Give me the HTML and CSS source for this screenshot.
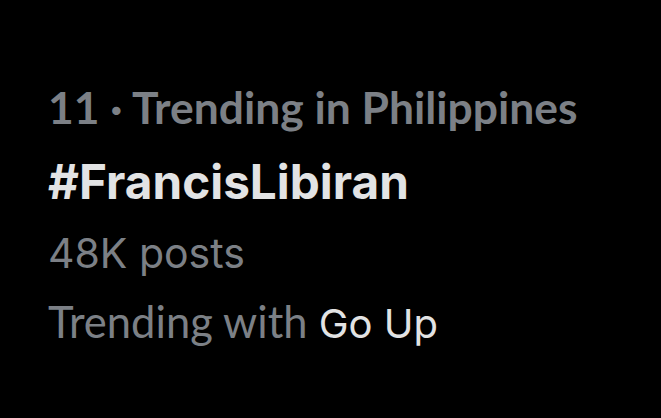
FILE: index.html
```html
<!DOCTYPE html>
<html>
<head>
<meta charset="utf-8">
<link rel="stylesheet" href="styles.css">
</head>
<body>
<div class="trend">
  <div class="meta">11 · Trending in Philippines</div>
  <div class="tag">#FrancisLibiran</div>
  <div class="count">48K posts</div>
  <div class="with">Trending with <span class="with-name">Go Up</span></div>
</div>
</body>
</html>
```

FILE: styles.css
```css
html, body {
  margin: 0;
  padding: 0;
  background: #000000;
  width: 661px;
  height: 418px;
  overflow: hidden;
}
.trend {
  padding: 81px 0 0 48px;
  display: flex;
  flex-direction: column;
}
.meta {
  font-family: Lato, "Liberation Sans", sans-serif;
  font-weight: 700;
  font-size: 44.4px;
  line-height: 52px;
  color: #7c8086;
  white-space: nowrap;
}
.tag {
  margin-top: 21px;
  font-family: Inter, "Liberation Sans", sans-serif;
  font-weight: 700;
  font-size: 47.7px;
  line-height: 56px;
  color: #e2e3e4;
  white-space: nowrap;
}
.count {
  margin-top: 18px;
  font-family: Inter, "Liberation Sans", sans-serif;
  font-weight: 400;
  font-size: 41px;
  line-height: 50px;
  color: #7c8086;
  white-space: nowrap;
}
.with {
  margin-top: 17px;
  font-family: Lato, "Liberation Sans", sans-serif;
  font-weight: 400;
  font-size: 43.5px;
  line-height: 52px;
  color: #7c8086;
  white-space: nowrap;
}
.with-name {
  font-family: Inter, "Liberation Sans", sans-serif;
  font-size: 40px;
  color: #e2e3e4;
}
```
